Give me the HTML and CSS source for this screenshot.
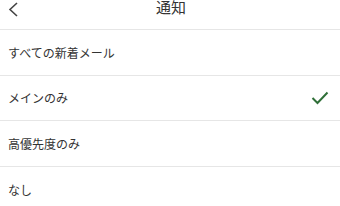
FILE: index.html
```html
<!DOCTYPE html>
<html lang="ja">
<head>
  <meta charset="UTF-8">
  <title>通知</title>
  <link rel="stylesheet" href="styles.css">
</head>
<body>
  <div class="screen">
    <div class="header">
      <span class="back">
        <svg width="12" height="16" viewBox="0 0 12 16"><path d="M10 1 L3 7.5 L10 14" fill="none" stroke="#444" stroke-width="1.6"/></svg>
      </span>
      <span class="title">通知</span>
    </div>
    <ul class="options">
      <li class="option">すべての新着メール</li>
      <li class="option">メインのみ
        <svg class="check" width="18" height="14" viewBox="0 0 18 14"><path d="M1.5 7 L6.5 12 L16.5 1.5" fill="none" stroke="#2f6f38" stroke-width="2"/></svg>
      </li>
      <li class="option">高優先度のみ</li>
      <li class="option">なし</li>
    </ul>
  </div>
</body>
</html>
```

FILE: styles.css
```css
body{
  margin:0;
  background:white;
  font-family: "Noto Sans CJK JP", "Noto Sans", sans-serif;
  color:#333;
}
.screen{
  width:340px;
  height:206px;
  overflow:hidden;
}
.header{
  position:relative;
  height:29px;
  border-bottom:1px solid #e6e6e6;
  text-align:center;
}
.back{
  position:absolute;
  left:7px;
  top:-1px;
}
.title{
  display:inline-block;
  font-size:15px;
  line-height:13px;
  padding:0 0 0 2px;
  vertical-align:top;
}
ul.options{
  margin:0;
  padding:0;
  list-style:none;
}
ul.options li.option{
  display:flex;
  align-items:center;
  justify-content:space-between;
  box-sizing:border-box;
  height:45.67px;
  padding:0 12px 0 8px;
  border-bottom:1px solid #e6e6e6;
  font-size:12px;
}
ul.options li.option:last-child{
  border-bottom:none;
}
.check{
  margin-right:-1px;
}
```
